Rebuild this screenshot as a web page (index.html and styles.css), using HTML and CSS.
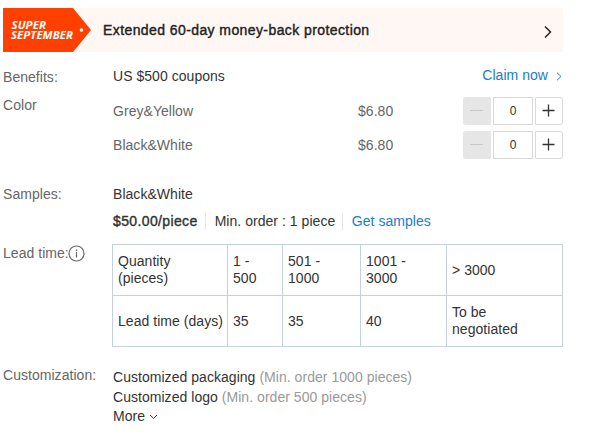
FILE: index.html
```html
<!DOCTYPE html>
<html lang="en">
<head>
<meta charset="utf-8">
<title>Product options</title>
<link rel="stylesheet" href="styles.css">
</head>
<body>
<main class="panel">
  <a class="banner">
    <svg class="banner-shape" width="88" height="44" viewBox="0 0 88 44">
      <path d="M0 0H70L88 22L70 44H0Z" fill="#ff4000"/>
      <circle cx="78.500" cy="22" r="1.800" fill="#fff"/>
      <text class="tag-text" x="8.500" y="21" textLength="34.500" lengthAdjust="spacingAndGlyphs">SUPER</text>
      <text class="tag-text" x="8" y="31" textLength="62" lengthAdjust="spacingAndGlyphs">SEPTEMBER</text>
    </svg>
    <span class="banner-title">Extended 60-day money-back protection</span>
    <svg class="banner-arrow" width="8" height="14" viewBox="0 0 8 14"><path d="M1 1.500L6.500 7L1 12.500"/></svg>
  </a>

  <section class="row benefits">
    <div class="label">Benefits:</div>
    <div class="value split">
      <span>US $500 coupons</span>
      <a class="link claim">Claim now<svg width="6" height="9" viewBox="0 0 6 9"><path d="M1 .7L5 4.500L1 8.300"/></svg></a>
    </div>
  </section>

  <section class="row color">
    <div class="label">Color</div>
    <div class="value skus">
      <div class="sku">
        <span class="sku-name">Grey&amp;Yellow</span><span class="sku-price">$6.80</span>
        <div class="stepper">
          <span class="btn minus"><svg width="13" height="13" viewBox="0 0 13 13"><path d="M0 6.500H13"/></svg></span>
          <span class="count">0</span>
          <span class="btn plus"><svg width="13" height="13" viewBox="0 0 13 13"><path d="M.5 6.500H12.500M6.500 .5V12.500"/></svg></span>
        </div>
      </div>
      <div class="sku">
        <span class="sku-name">Black&amp;White</span><span class="sku-price">$6.80</span>
        <div class="stepper">
          <span class="btn minus"><svg width="13" height="13" viewBox="0 0 13 13"><path d="M0 6.500H13"/></svg></span>
          <span class="count">0</span>
          <span class="btn plus"><svg width="13" height="13" viewBox="0 0 13 13"><path d="M.5 6.500H12.500M6.500 .5V12.500"/></svg></span>
        </div>
      </div>
    </div>
  </section>

  <section class="row samples">
    <div class="label">Samples:</div>
    <div class="value">
      <div>Black&amp;White</div>
      <div class="sample-info">
        <span class="price">$50.00/piece</span>
        <span class="cell">Min. order : 1 piece</span>
        <a class="cell link">Get samples</a>
      </div>
    </div>
  </section>

  <section class="row lead">
    <div class="label lead-label">Lead time:<svg width="17" height="17" viewBox="0 0 17 17"><circle cx="8.500" cy="8.500" r="7.500"/><path d="M8.500 4.500V6M8.500 7.300V12.500"/></svg></div>
    <table class="lead-table">
      <colgroup><col class="c1"><col class="c2"><col class="c3"><col class="c4"><col class="c5"></colgroup>
      <tr><td>Quantity<br>(pieces)</td><td>1 -<br>500</td><td>501 -<br>1000</td><td>1001 -<br>3000</td><td>&gt; 3000</td></tr>
      <tr><td>Lead time (days)</td><td>35</td><td>35</td><td>40</td><td>To be<br>negotiated</td></tr>
    </table>
  </section>

  <section class="row custom">
    <div class="label">Customization:</div>
    <div class="value custom-list">
      <div>Customized packaging <span class="muted">(Min. order 1000 pieces)</span></div>
      <div>Customized logo <span class="muted">(Min. order 500 pieces)</span></div>
      <div class="more">More<svg width="9" height="6" viewBox="0 0 9 6"><path d="M1 1L4.500 4.300L8 1"/></svg></div>
    </div>
  </section>
</main>
</body>
</html>
```
FILE: styles.css
```css
* { box-sizing: border-box; }
body {
  margin: 0;
  background: #fff;
  color: #333;
  font: 14px/20px "Liberation Sans", Arial, sans-serif;
  letter-spacing: .04px;
}
svg { flex: none; fill: none; stroke: currentColor; }
.panel { width: 560px; margin: 8px 0 0 3px; }
.banner {
  display: flex;
  align-items: center;
  height: 44px;
  padding-right: 11px;
  background: #fff7f4;
  color: #222;
}
.banner-shape { stroke: none; }
.tag-text {
  fill: #fff;
  font: italic 700 11px "Open Sans", sans-serif;
}
.banner-title {
  margin-left: 12px;
  letter-spacing: .41px;
  -webkit-text-stroke: .4px currentColor;
}
.banner-arrow { margin: 3px 0 0 auto; stroke-width: 1.5; }
.row { display: grid; grid-template-columns: 110px 450px; }
.label { color: #666; }
.link { color: #1a7ccc; }
.benefits { margin-top: 14px; }
.benefits .label { padding-top: 1px; }
.split { display: flex; justify-content: space-between; }
.claim {
  display: flex;
  align-items: center;
  gap: 8px;
  margin-top: -1px;
  padding-right: 1px;
  height: 20px;
}
.claim svg { margin-top: 2px; }
.color { margin-top: 8px; }
.skus { display: grid; gap: 6px; padding-top: 2px; }
.sku {
  display: grid;
  grid-template-columns: 245px 105px 100px;
  align-items: center;
  height: 28px;
  color: #666;
}
.stepper { display: flex; gap: 2px; color: #333; }
.btn, .count {
  display: flex;
  align-items: center;
  justify-content: center;
  width: 28px;
  height: 28px;
}
.btn svg { margin: 0 1px 1px 0; }
.count { width: 40px; border: 1px solid #d8d8d8; font-size: 12px; }
.minus { background: #e6e6e6; color: #c8c8c8; border-radius: 3px 0 0 3px; }
.plus { border: 1px solid #d8d8d8; border-radius: 0 3px 3px 0; }
.plus svg { stroke-width: 1.3; }
.samples { margin-top: 25px; }
.sample-info { display: flex; align-items: center; margin-top: 7px; }
.price { letter-spacing: .37px; -webkit-text-stroke: .4px currentColor; }
.cell {
  display: flex;
  align-items: center;
  height: 17px;
  margin-left: 7px;
  padding-left: 9px;
  border-left: 1px solid #e6e6e6;
}
.cell.link { padding-left: 8.5px; }
.lead { margin-top: 13px; }
.lead-label { display: flex; height: 20px; margin-top: -1px; }
.lead-label svg { margin: 2px 0 0 -.5px; stroke-width: 1.2; }
.lead-table {
  width: 451px;
  margin-left: -1px;
  border-collapse: collapse;
  table-layout: fixed;
  line-height: 17px;
}
.lead-table td { height: 51px; padding: 0 0 0 5px; border: 1px solid #c6d0e2; }
.c1 { width: 115px; }
.c2 { width: 55px; }
.c3 { width: 78px; }
.c4 { width: 86px; }
.custom { margin-top: 18px; }
.custom-list { padding-top: 2px; }
.muted { color: #999; }
.more { display: flex; align-items: center; gap: 4px; margin-top: -1px; }
.more svg { margin-top: 2px; }
```
